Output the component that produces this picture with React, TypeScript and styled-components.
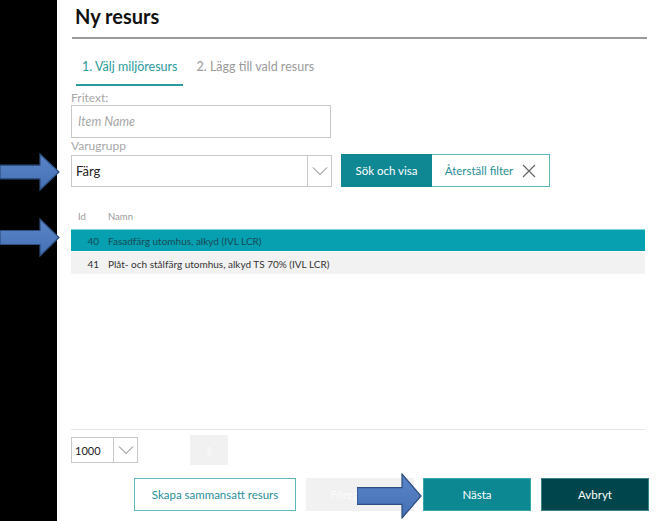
import styled, { createGlobalStyle } from "styled-components";

const GlobalStyle = createGlobalStyle`
  html, body {
    margin: 0;
    padding: 0;
    background: #fff;
  }
  body {
    font-family: "Segoe UI", Lato, "Open Sans", sans-serif;
    color: #222;
  }
`;

const rows = [
  { id: 40, name: "Fasadfärg utomhus, alkyd (IVL LCR)" },
  { id: 41, name: "Plåt- och stålfärg utomhus, alkyd TS 70% (IVL LCR)" },
];

const Chevron = () => (
  <svg width="16" height="10" viewBox="0 0 16 10">
    <path d="M1 1.5 L8 8.5 L15 1.5" fill="none" stroke="#777" strokeWidth="1" />
  </svg>
);

const CloseIcon = () => (
  <svg width="14" height="14" viewBox="0 0 14 14">
    <path d="M1 1 L13 13 M13 1 L1 13" fill="none" stroke="#666" strokeWidth="1.2" />
  </svg>
);

const Arrow = ({ width, height }: { width: number; height: number }) => {
  const head = 20;
  const bodyTop = height * 0.32;
  const bodyBottom = height * 0.68;
  const mid = height / 2;
  return (
    <svg width={width} height={height} viewBox={`0 0 ${width} ${height}`}>
      <defs>
        <linearGradient id="arrowFill" x1="0" y1="0" x2="0" y2="1">
          <stop offset="0" stopColor="#5a86c8" />
          <stop offset="1" stopColor="#4570b4" />
        </linearGradient>
      </defs>
      <path
        d={`M0 ${bodyTop} L${width - head} ${bodyTop} L${width - head} 1 L${width - 1} ${mid} L${width - head} ${height - 1} L${width - head} ${bodyBottom} L0 ${bodyBottom} Z`}
        fill="url(#arrowFill)"
        stroke="#2c4d7f"
        strokeWidth="1.2"
        strokeLinejoin="miter"
      />
    </svg>
  );
};

const App = () => {
  return (
    <>
      <GlobalStyle />
      <Page>
        <Sidebar />
        <Main>
          <Title>Ny resurs</Title>
          <Rule />
          <Tabs>
            <Tab active>1. Välj miljöresurs</Tab>
            <Tab>2. Lägg till vald resurs</Tab>
          </Tabs>
          <FieldLabel gap={4}>Fritext:</FieldLabel>
          <TextInput placeholder="Item Name" />
          <FieldLabel gap={0}>Varugrupp</FieldLabel>
          <FilterRow>
            <Select width={261}>
              <SelectValue>Färg</SelectValue>
              <SelectToggle>
                <Chevron />
              </SelectToggle>
            </Select>
            <ButtonGroup>
              <SearchButton>Sök och visa</SearchButton>
              <ResetButton>
                Återställ filter
                <CloseIcon />
              </ResetButton>
            </ButtonGroup>
          </FilterRow>
          <Table>
            <HeaderRow>
              <IdCell header>Id</IdCell>
              <NameCell header>Namn</NameCell>
            </HeaderRow>
            {rows.map((row, i) => (
              <DataRow key={row.id} selected={i === 0}>
                <IdCell>{row.id}</IdCell>
                <NameCell>{row.name}</NameCell>
              </DataRow>
            ))}
          </Table>
          <Spacer />
          <Pager>
            <Select width={67} small>
              <SelectValue small>1000</SelectValue>
              <SelectToggle small>
                <Chevron />
              </SelectToggle>
            </Select>
            <PageButton>1</PageButton>
          </Pager>
          <Actions>
            <OutlineButton>Skapa sammansatt resurs</OutlineButton>
            <DisabledButton>Föregående</DisabledButton>
            <PrimaryButton>Nästa</PrimaryButton>
            <DarkButton>Avbryt</DarkButton>
          </Actions>
        </Main>
        <ArrowMark top={153} left={0}>
          <Arrow width={60} height={38} />
        </ArrowMark>
        <ArrowMark top={218} left={0}>
          <Arrow width={60} height={39} />
        </ArrowMark>
        <ArrowMark top={473} left={357}>
          <Arrow width={65} height={46} />
        </ArrowMark>
      </Page>
    </>
  );
};

export default App;

// 페이지 전체
const Page = styled.div`
  position: relative;
  display: flex;
  width: 663px;
  height: 521px;
  overflow: hidden;
  background: #fff;
`;

const Sidebar = styled.div`
  width: 57px;
  flex-shrink: 0;
  background: #000;
`;

const Main = styled.div`
  flex: 1;
  display: flex;
  flex-direction: column;
  padding: 0 18px 0 14px;
`;

const Title = styled.h1`
  margin: 4px 0 0 4px;
  font-size: 20px;
  line-height: 24px;
  font-weight: 700;
  color: #111;
`;

const Rule = styled.div`
  height: 2px;
  margin: 9px -2px 0 1px;
  background: #9a9a9a;
`;

const Tabs = styled.div`
  display: flex;
  gap: 7px;
  margin: 19px 0 0 5px;
`;

const Tab = styled.div<{ active?: boolean }>`
  padding: 0 6px 9px;
  font-size: 12.5px;
  line-height: 17px;
  color: ${(p) => (p.active ? "#2a9a9a" : "#9a9a9a")};
  border-bottom: 2px solid ${(p) => (p.active ? "#2a9a9a" : "transparent")};
`;

const FieldLabel = styled.div<{ gap: number }>`
  margin-top: ${(p) => p.gap}px;
  font-size: 12px;
  line-height: 15px;
  color: #a8a8a8;
`;

const TextInput = styled.input`
  width: 260px;
  height: 33px;
  box-sizing: border-box;
  border: 1px solid #c8c8c8;
  padding: 0 6px;
  font-family: inherit;
  font-size: 12.5px;
  outline: none;
  &::placeholder {
    color: #a8a8a8;
    font-style: italic;
  }
`;

const FilterRow = styled.div`
  display: flex;
  align-items: center;
  gap: 9px;
  margin-top: 1px;
`;

const Select = styled.div<{ width: number; small?: boolean }>`
  display: flex;
  width: ${(p) => p.width}px;
  height: ${(p) => (p.small ? 26 : 32)}px;
  box-sizing: border-box;
  border: 1px solid #c8c8c8;
  background: #fff;
`;

const SelectValue = styled.div<{ small?: boolean }>`
  flex: 1;
  display: flex;
  align-items: center;
  padding-left: ${(p) => (p.small ? 3 : 4)}px;
  font-size: ${(p) => (p.small ? 11 : 13)}px;
  color: #222;
`;

const SelectToggle = styled.div<{ small?: boolean }>`
  width: 23px;
  display: flex;
  align-items: center;
  justify-content: center;
  border-left: 1px solid #c8c8c8;
`;

const ButtonGroup = styled.div`
  display: flex;
  height: 33px;
`;

const SearchButton = styled.div`
  width: 91px;
  display: flex;
  align-items: center;
  justify-content: center;
  background: #0f8893;
  color: #fff;
  font-size: 11.5px;
  border: 1px solid #0f8893;
  box-sizing: border-box;
`;

const ResetButton = styled.div`
  width: 118px;
  display: flex;
  align-items: center;
  justify-content: center;
  gap: 9px;
  border: 1px solid #5cb8bd;
  border-left: none;
  box-sizing: border-box;
  color: #2a8e98;
  font-size: 11.5px;
`;

const Table = styled.div`
  display: flex;
  flex-direction: column;
  margin-top: 21px;
`;

const HeaderRow = styled.div`
  display: flex;
  height: 17px;
  align-items: center;
  font-size: 9.5px;
  color: #999;
  margin-bottom: 4px;
`;

const DataRow = styled.div<{ selected?: boolean }>`
  display: flex;
  align-items: center;
  height: 22px;
  margin-bottom: 1px;
  font-size: 10px;
  background: ${(p) => (p.selected ? "#06a0b0" : "#f2f2f2")};
  color: ${(p) => (p.selected ? "#174a55" : "#333")};
  border-top: 1px solid ${(p) => (p.selected ? "#7ad4dc" : "transparent")};
  box-sizing: border-box;
`;

const IdCell = styled.div<{ header?: boolean }>`
  width: 28px;
  box-sizing: border-box;
  text-align: ${(p) => (p.header ? "left" : "right")};
  padding-left: ${(p) => (p.header ? 7 : 0)}px;
`;

const NameCell = styled.div<{ header?: boolean }>`
  padding-left: 9px;
`;

const Spacer = styled.div`
  flex: 1;
`;

const Pager = styled.div`
  display: flex;
  align-items: center;
  gap: 52px;
  height: 30px;
  border-top: 1px solid #e6e6e6;
  padding-top: 5px;
`;

const PageButton = styled.div`
  width: 38px;
  height: 30px;
  display: flex;
  align-items: center;
  justify-content: center;
  background: #f1f1f1;
  color: #fbfbfb;
  font-size: 11px;
`;

const Actions = styled.div`
  display: flex;
  justify-content: flex-end;
  gap: 9px;
  margin: 13px -4px 10px 0;
`;

const BaseButton = styled.div`
  height: 33px;
  width: 108px;
  box-sizing: border-box;
  display: flex;
  align-items: center;
  justify-content: center;
  font-size: 11.5px;
`;

const OutlineButton = styled(BaseButton)`
  width: 162px;
  border: 1px solid #5cb8bd;
  color: #2a8e98;
  margin-right: 1px;
`;

const DisabledButton = styled(BaseButton)`
  background: #f1f1f1;
  color: #fafafa;
`;

const PrimaryButton = styled(BaseButton)`
  background: #0b8891;
  color: #fff;
  border: 1px solid #3aa8b0;
`;

const DarkButton = styled(BaseButton)`
  background: #00454b;
  color: #fff;
  border: 1px solid #3b8288;
  margin-left: 1px;
`;

const ArrowMark = styled.div<{ top: number; left: number }>`
  position: absolute;
  top: ${(p) => p.top}px;
  left: ${(p) => p.left}px;
  line-height: 0;
`;
